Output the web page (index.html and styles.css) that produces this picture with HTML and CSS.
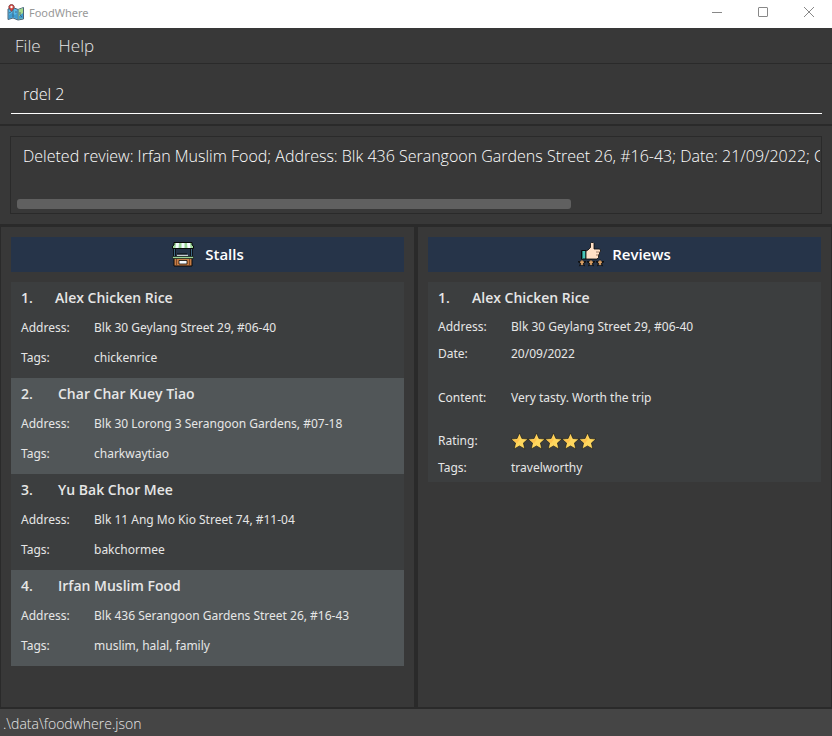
FILE: index.html
```html
<!DOCTYPE html>
<html lang="en">
<head>
<meta charset="utf-8">
<title>FoodWhere</title>
<link rel="stylesheet" href="styles.css">
</head>
<body>
<svg class="defs" aria-hidden="true">
  <symbol id="star" viewBox="0 0 17 17">
    <path d="M8.500 0 10.900 5.500 17 6.100 12.400 10 13.800 16 8.500 12.900 3.200 16 4.600 10 0 6.100 6.100 5.500Z" fill="#ffd75e" stroke="#151515" stroke-width=".6"/>
    <path d="M8.500 2 6.800 6.500 2 7 6 10.300 8.500 7Z" fill="#ffc34d"/>
  </symbol>
  <symbol id="mini-star" viewBox="0 0 8 8">
    <path d="M4 0 5 2 8 2V3.200L6 4.600 7.200 7.500 4 6 .8 7.500 2 4.600 0 3.200V2H3Z" fill="#111"/>
    <path d="M4 1.200V5.500M2 3.200H6M2.800 5.200H5.200" stroke="#f7b573" stroke-width="1.200"/>
  </symbol>
</svg>
<header class="titlebar">
  <svg class="app-icon" viewBox="0 0 18 18" aria-hidden="true">
    <path d="M1 5 6 3.500 11 5.500 16.500 3.500V15L11 16 6 14 1 15.500Z" fill="#58b8e8" stroke="#4a6478"/>
    <path d="M11.500 5.500 16 4V14L11.500 15.500Z" fill="#a5d88c"/>
    <path d="M2 11 5 9 8 11 10 9V14.500L6 13 2 14.500ZM12 12 16 9V14L12 15Z" fill="#3e9bd0"/>
    <path d="M6 4V13.500M11 6V15.500M8 8H10M2 9 4 8M13 8V11L15 13" stroke="#3d5a70" fill="none" stroke-width=".8"/>
    <path d="M4.500 7.500 2.200 4.500A2.700 2.700 0 1 1 6.800 4.500Z" fill="#d6473f" stroke="#6e3d42" stroke-width=".7"/>
    <circle cx="4.500" cy="3" r="1.200" fill="#fff"/>
  </svg>
  <h1>FoodWhere</h1>
  <div class="window-controls">
    <button aria-label="Minimize"><svg viewBox="0 0 12 12"><path d="M1 5.500H11"/></svg></button>
    <button aria-label="Maximize"><svg viewBox="0 0 12 12"><rect x="1.500" y=".5" width="9" height="9" rx=".5"/></svg></button>
    <button aria-label="Close"><svg viewBox="0 0 12 12"><path d="M1 0 11 10M11 0 1 10"/></svg></button>
  </div>
</header>
<nav class="menubar">
  <button>File</button>
  <button>Help</button>
</nav>
<div class="command">
  <input type="text" value="rdel 2" aria-label="Command">
</div>
<div class="result">
  <div class="result-box">
    <textarea readonly wrap="off" aria-label="Result">Deleted review: Irfan Muslim Food; Address: Blk 436 Serangoon Gardens Street 26, #16-43; Date: 21/09/2022; Content:</textarea>
    <div class="track"><div class="thumb"></div></div>
  </div>
</div>
<main class="panels">
  <section class="panel">
    <h2>
      <svg class="heading-icon" viewBox="0 0 24 26" aria-hidden="true">
        <path d="M3.500 7V15M20.500 7V15" stroke="#3d6680"/>
        <path d="M2.500 7V15M21.500 7V15M4.500 8V15M19.500 8V15" stroke="#090909" stroke-width=".8"/>
        <path d="M3 1.500H21V4L22.500 5V7.500H1.500V5L3 4Z" fill="#9bd497" stroke="#090909"/>
        <path d="M5 2H8L7.500 7H4.500ZM10.500 2H13.500V7H10.500ZM16 2H19L19.500 7H16.500Z" fill="#f4fbff"/>
        <path d="M6 13H16" stroke="#090909"/>
        <path d="M6 14.300H17" stroke="#f2f5f8"/>
        <path d="M3 17H21V25H3Z" fill="#c87d45" stroke="#090909"/>
        <path d="M1.500 15.500H22.500V17.500H1.500Z" fill="#9bd497" stroke="#090909" stroke-width=".6"/>
        <path d="M5.500 18V24.500M18.500 18V24.500" stroke="#6b3f24" stroke-width=".8"/>
        <path d="M8 19.500H16V23H8Z" fill="#f4fbff" stroke="#090909" stroke-width=".8"/>
      </svg>
      Stalls
    </h2>
    <ol class="list">
      <li class="card">
        <h3><span class="index">1.</span>Alex Chicken Rice</h3>
        <dl><dt>Address:</dt><dd>Blk 30 Geylang Street 29, #06-40</dd><dt>Tags:</dt><dd>chickenrice</dd></dl>
      </li>
      <li class="card">
        <h3><span class="index">2.</span>Char Char Kuey Tiao</h3>
        <dl><dt>Address:</dt><dd>Blk 30 Lorong 3 Serangoon Gardens, #07-18</dd><dt>Tags:</dt><dd>charkwaytiao</dd></dl>
      </li>
      <li class="card">
        <h3><span class="index">3.</span>Yu Bak Chor Mee</h3>
        <dl><dt>Address:</dt><dd>Blk 11 Ang Mo Kio Street 74, #11-04</dd><dt>Tags:</dt><dd>bakchormee</dd></dl>
      </li>
      <li class="card">
        <h3><span class="index">4.</span>Irfan Muslim Food</h3>
        <dl><dt>Address:</dt><dd>Blk 436 Serangoon Gardens Street 26, #16-43</dd><dt>Tags:</dt><dd>muslim, halal, family</dd></dl>
      </li>
    </ol>
  </section>
  <section class="panel">
    <h2>
      <svg class="heading-icon" viewBox="0 0 24 26" aria-hidden="true">
        <path d="M3.500 9.500H8V18H3.500Z" fill="#49c5b6" stroke="#090909"/>
        <path d="M4.500 10V17.500" stroke="#237c78"/>
        <path d="M8 10 10 9 12.500 6.500V2.500L13.500 1.500H15L16 2.500V8H21.500L22.500 9V10.500L21.500 11.500V13L20.500 14V16.500L19 18H8Z" fill="#ffe0c6" stroke="#090909" stroke-width=".8" stroke-linejoin="round"/>
        <path d="M18 11H22M18 14H21" stroke="#775544" stroke-width=".7"/>
        <use href="#mini-star" x="0" y="18" width="8" height="8"/>
        <use href="#mini-star" x="9" y="18" width="8" height="8"/>
        <use href="#mini-star" x="18" y="18" width="8" height="8"/>
      </svg>
      Reviews
    </h2>
    <ol class="list">
      <li class="card review">
        <h3><span class="index">1.</span>Alex Chicken Rice</h3>
        <dl>
          <dt>Address:</dt><dd>Blk 30 Geylang Street 29, #06-40</dd>
          <dt>Date:</dt><dd>20/09/2022</dd>
          <dt>Content:</dt><dd>Very tasty. Worth the trip</dd>
          <dt>Rating:</dt>
          <dd class="stars" role="img" aria-label="5 stars">
            <svg><use href="#star"/></svg><svg><use href="#star"/></svg><svg><use href="#star"/></svg><svg><use href="#star"/></svg><svg><use href="#star"/></svg>
          </dd>
          <dt>Tags:</dt><dd>travelworthy</dd>
        </dl>
      </li>
    </ol>
  </section>
</main>
<footer class="statusbar">.\data\foodwhere.json</footer>
</body>
</html>
```
FILE: styles.css
```css
* { box-sizing: border-box; }

body {
  margin: 0;
  min-height: 100vh;
  display: flex;
  flex-direction: column;
  background: #383838;
  color: #e6e6e6;
  font-family: "Open Sans", "Noto Sans", sans-serif;
  font-size: 12px;
}

button, input, textarea { font: inherit; color: inherit; background: none; border: 0; padding: 0; }
h1, h2, h3, dl, dd, ol { margin: 0; padding: 0; }
ol { list-style: none; }
.defs { display: none; }

.titlebar {
  display: flex;
  align-items: center;
  height: 28px;
  padding: 0 0 3px 7px;
  gap: 4px;
  background: #fff;
  color: #999;
}
.app-icon { width: 18px; height: 18px; }
.titlebar h1 { flex: 1; font-family: "Noto Sans", sans-serif; font-size: 11px; font-weight: 400; }
.window-controls { display: flex; }
.window-controls button { width: 46px; height: 25px; display: grid; place-items: center; }
.window-controls svg { width: 12px; height: 12px; fill: none; stroke: #888; }

.menubar {
  display: flex;
  gap: 18px;
  height: 36px;
  padding: 0 15px;
  border-bottom: 1px solid #2a2a2a;
}
.menubar button { font-size: 17px; font-weight: 300; }

.command { padding: 10px 10px 10px 11px; border-bottom: 2px solid #2a2a2a; }
.command input {
  display: block;
  width: 100%;
  height: 40px;
  padding: 0 12px;
  border-bottom: 1px solid #fff;
  color: #fff;
  font-size: 16px;
  font-weight: 300;
  outline: 0;
}

.result { padding: 10px; border-bottom: 3px solid #2a2a2a; }
.result-box { height: 78px; display: flex; flex-direction: column; border: 1px solid #2a2a2a; }
.result-box textarea {
  flex: 1;
  margin: 7px 1px 0 12px;
  resize: none;
  overflow: hidden;
  color: #fff;
  font-size: 16px;
  font-weight: 300;
  line-height: 24px;
  outline: 0;
}
.track { padding: 0 12px 4px 6px; }
.thumb { width: 70%; height: 10px; border-radius: 3px; background: #606060; }

.panels { flex: 1; display: grid; grid-template-columns: 1fr 1fr; border-left: 1px solid #2a2a2a; border-right: 1px solid #2a2a2a; }
.panel { padding: 10px; }
.panel + .panel { border-left: 4px solid #2a2a2a; padding-left: 10px; margin-left: -2px; }
.panel:first-child { padding-right: 12px; }

h2 {
  display: flex;
  align-items: center;
  justify-content: center;
  gap: 10px;
  height: 35px;
  padding-bottom: 2px;
  margin-bottom: 10px;
  background: #263449;
  color: #fff;
  font-size: 15px;
  font-weight: 600;
}
.heading-icon { width: 24px; height: 26px; overflow: visible; }

.card { height: 96px; padding: 4px 10px 0; background: #3c3e3f; }
.card:nth-child(even) { background: #515658; }
h3 { display: flex; font-size: 14px; font-weight: 600; line-height: 24px; }
.index { width: 37px; }
.card:first-child .index { width: 34px; }
dl {
  display: grid;
  grid-template-columns: 73px 1fr;
  grid-auto-rows: 30px;
  align-items: center;
  margin-top: 3px;
  font-family: "Noto Sans", sans-serif;
  line-height: 18px;
}
.card.review { height: auto; }
.review dl { grid-template-rows: 27px 27px 61px 26px 28px; }
.stars { display: flex; }
.stars svg { width: 17px; height: 17px; }

.statusbar {
  height: 29px;
  padding: 3px 3px 0;
  border-top: 2px solid #2a2a2a;
  background: #454545;
  font-size: 14px;
  font-weight: 300;
  line-height: 24px;
}
```
